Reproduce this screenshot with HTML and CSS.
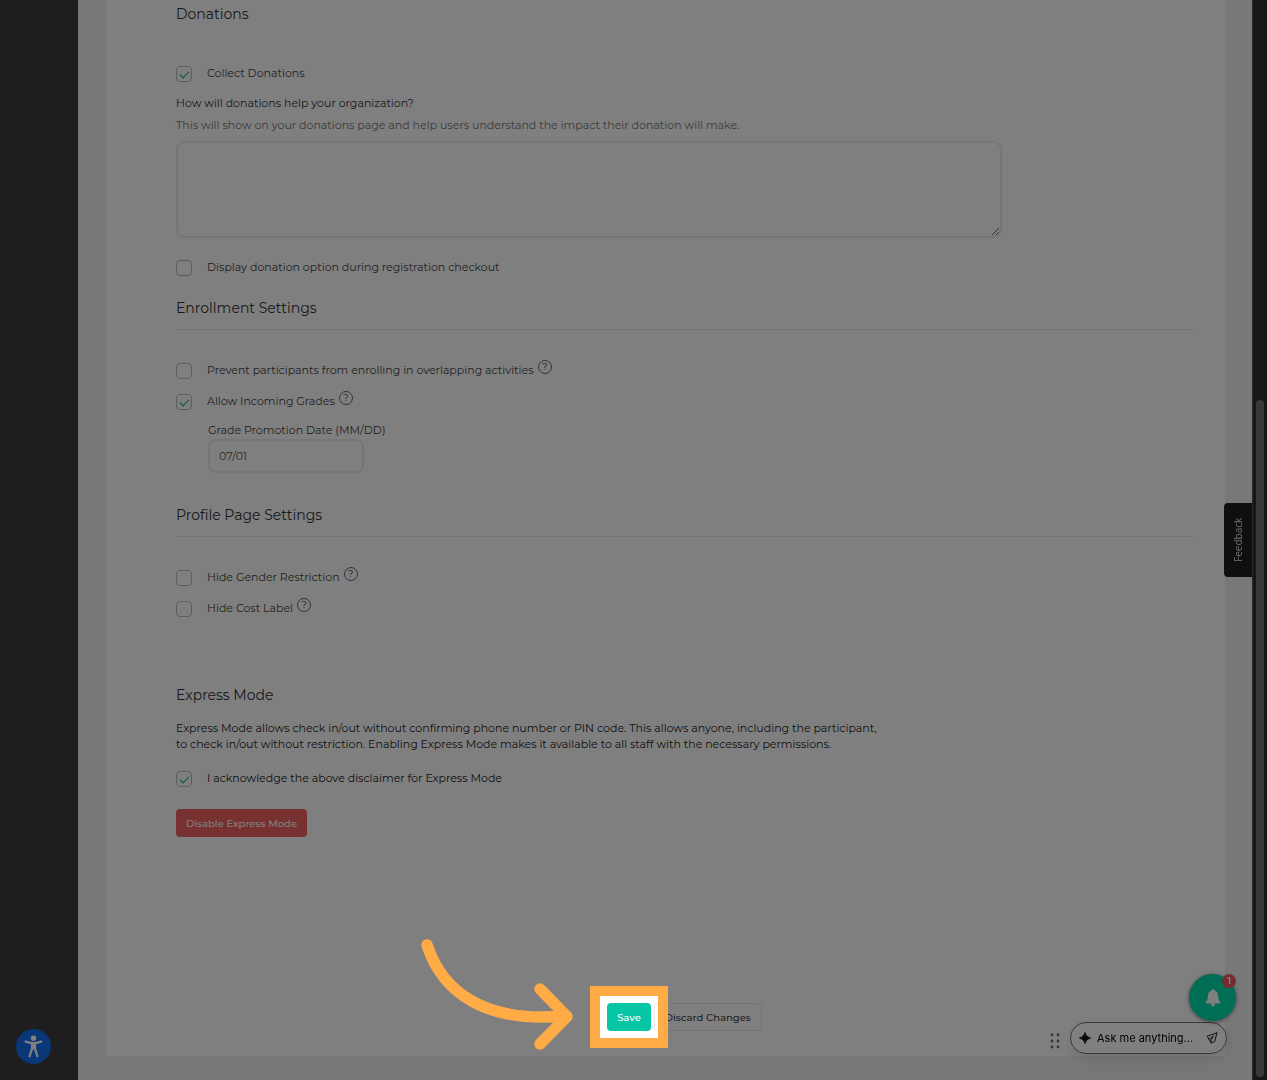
FILE: index.html
```
<!DOCTYPE html>
<html lang="en">
<head>
    <meta charset="UTF-8"/>
    <meta name="viewport" content="width=device-width, initial-scale=1"/>
    <title>Organization Settings</title>
    <link rel="stylesheet" href="styles.css">
</head>
<body>
<div class="page">
    <aside class="sidebar"></aside>

    <main class="main">
        <form class="card">
            <!-- ========== DONATIONS ========== -->
            <section class="section donations">
                <h2>Donations</h2>
                <div class="check-row">
                    <input type="checkbox" id="collect" checked/>
                    <label for="collect">Collect Donations</label>
                </div>
                <label class="field-label" for="impact">How will donations help your organization?</label>
                <p class="hint">This will show on your donations page and help users understand the impact their donation will make.</p>
                <textarea id="impact"></textarea>
                <div class="check-row">
                    <input type="checkbox" id="checkout"/>
                    <label for="checkout">Display donation option during registration checkout</label>
                </div>
            </section>

            <!-- ========== ENROLLMENT ========== -->
            <section class="section enrollment">
                <h2 class="ruled">Enrollment Settings</h2>
                <div class="check-row">
                    <input type="checkbox" id="overlap"/>
                    <label for="overlap">Prevent participants from enrolling in overlapping activities</label>
                    <span class="help">?</span>
                </div>
                <div class="check-row">
                    <input type="checkbox" id="grades" checked/>
                    <label for="grades">Allow Incoming Grades</label>
                    <span class="help">?</span>
                </div>
                <div class="sub-field">
                    <label for="promotion">Grade Promotion Date (MM/DD)</label>
                    <input type="text" id="promotion" value="07/01"/>
                </div>
            </section>

            <!-- ========== PROFILE PAGE ========== -->
            <section class="section profile">
                <h2 class="ruled">Profile Page Settings</h2>
                <div class="check-row">
                    <input type="checkbox" id="gender"/>
                    <label for="gender">Hide Gender Restriction</label>
                    <span class="help">?</span>
                </div>
                <div class="check-row">
                    <input type="checkbox" id="cost"/>
                    <label for="cost">Hide Cost Label</label>
                    <span class="help">?</span>
                </div>
            </section>

            <!-- ========== EXPRESS MODE ========== -->
            <section class="section express">
                <h2>Express Mode</h2>
                <p>Express Mode allows check in/out without confirming phone number or PIN code. This allows anyone, including the participant,<br/>
                    to check in/out without restriction. Enabling Express Mode makes it available to all staff with the necessary permissions.</p>
                <div class="check-row">
                    <input type="checkbox" id="ack" checked/>
                    <label for="ack">I acknowledge the above disclaimer for Express Mode</label>
                </div>
                <button type="button" class="btn danger">Disable Express Mode</button>
            </section>

            <!-- ========== FORM ACTIONS ========== -->
            <div class="actions">
                <div class="save-wrap">
                    <button type="button" class="btn save">Save</button>
                    <div class="spotlight"></div>
                    <svg class="arrow" viewBox="0 0 156 114" fill="none" stroke="#ffac47" stroke-width="11.500" stroke-linecap="round" stroke-linejoin="round">
                        <path d="M8 8C24 57 68 86 145 79"/>
                        <path d="M121 52L148 79.500L121 107"/>
                    </svg>
                </div>
                <button type="button" class="btn discard">Discard Changes</button>
            </div>
        </form>
    </main>

    <div class="scrollbar"><div class="thumb"></div></div>
</div>

<!-- ========== FLOATING WIDGETS ========== -->
<button class="accessibility" aria-label="Accessibility">
    <svg width="35" height="35" viewBox="0 0 36 36">
        <circle cx="18" cy="9.500" r="2.800" fill="#fff"/>
        <path d="M10 13L16 14.500H20L26 13M16.500 15V20L14 28M19.500 15V20L22 28M18 15V20" fill="none" stroke="#fff" stroke-width="2.400" stroke-linecap="round" stroke-linejoin="round"/>
    </svg>
</button>

<button class="feedback">Feedback</button>

<button class="bell" aria-label="Notifications">
    <svg width="16" height="18" viewBox="0 0 16 18" fill="#fff">
        <path d="M8 0C8.700 0 9.200.500 9.200 1.300C11.800 1.900 13 4 13 6.500C13 10 13.800 11.500 15 12.600C15.800 13.500 15.400 14.600 14.400 14.600H1.600C.600 14.600.200 13.500 1 12.600C2.200 11.500 3 10 3 6.500C3 4 4.200 1.900 6.800 1.300C6.800.500 7.300 0 8 0Z"/>
        <path d="M5.700 14.400H10.300C10 16.500 9.200 17.200 8 17.200S6 16.500 5.700 14.400Z"/>
    </svg>
    <span class="badge">1</span>
</button>

<div class="assistant">
    <svg class="grip" width="10" height="16" viewBox="0 0 10 16" fill="#666">
        <circle cx="2" cy="2" r="1.400"/><circle cx="8" cy="2" r="1.400"/>
        <circle cx="2" cy="8" r="1.400"/><circle cx="8" cy="8" r="1.400"/>
        <circle cx="2" cy="14" r="1.400"/><circle cx="8" cy="14" r="1.400"/>
    </svg>
    <button class="ask">
        <svg width="12" height="12" viewBox="0 0 14 14" fill="#111">
            <path d="M7 0.500Q8 6 13.500 7Q8 8 7 13.500Q6 8 0.500 7Q6 6 7 0.500Z" stroke="#111" stroke-linejoin="round"/>
        </svg>
        <span>Ask me anything...</span>
        <svg class="send" width="12" height="12" viewBox="0 0 12 12" fill="none" stroke="#222" stroke-linejoin="round" stroke-linecap="round">
            <path d="M10.800 1L1 4.200L3 7.200L5.200 11L8.800 9.500L10.800 1ZM3 7.200L7.200 4.500M5.200 11L5 8.200L7.200 4.500"/>
        </svg>
    </button>
</div>
</body>
</html>
```
FILE: styles.css
```
/* ========== GLOBAL STYLES ========== */
* {
  box-sizing: border-box;
}

body {
  margin: 0;
  background-color: #f0f0f0;
  color: #444;
  font-family: Montserrat, "Noto Sans", sans-serif;
  font-size: 11px;
}

h2, p {
  margin: 0;
}

button, input, textarea {
  font: inherit;
}

button {
  padding: 0;
  border: none;
  cursor: pointer;
}

.page {
  display: flex;
  min-height: 100vh;
  overflow: hidden;
}

.sidebar {
  flex: 0 0 78px;
  background-color: #3d3d3d;
}

.main {
  flex: 1;
  padding: 0 27px 24px 28px;
}

.card {
  display: flex;
  flex-direction: column;
  min-height: calc(100vh - 24px);
  padding: 4px 32px 25px 70px;
  background-color: #fff;
}

.scrollbar {
  flex: 0 0 15px;
  display: flex;
  flex-direction: column;
  justify-content: flex-end;
  padding: 3px;
  border-left: 1px solid #555;
  background-color: #2e2e2e;
}

.thumb {
  height: 63%;
  border-radius: 4px;
  background-color: #707070;
}

/* ========== SECTIONS ========== */
h2 {
  margin-bottom: 34px;
  color: #333;
  font-size: 14px;
  font-weight: 400;
  line-height: 20px;
}

h2.ruled {
  margin-bottom: 25px;
  padding-bottom: 11px;
  border-bottom: 1px solid #e6e6e6;
}

.enrollment {
  margin-top: 15px;
}

.profile {
  margin-top: 32px;
}

.express {
  margin-top: 61px;
  color: #222;
}

.express h2 {
  margin-bottom: 15px;
}

.express p {
  margin-bottom: 11px;
  line-height: 16px;
}

.check-row {
  display: flex;
  align-items: center;
  height: 31px;
}

.check-row label {
  margin: 0 0 1px 15px;
}

input[type="checkbox"] {
  appearance: none;
  width: 16px;
  height: 16px;
  margin: 1px 0 0;
  border: 1px solid #bbb;
  border-radius: 4px;
}

input[type="checkbox"]:checked::before {
  content: "";
  display: block;
  width: 8px;
  height: 4px;
  margin: 4px 0 0 3px;
  border-left: 1px solid #00a878;
  border-bottom: 1px solid #00a878;
  transform: rotate(-45deg);
}

.help {
  width: 14px;
  height: 14px;
  margin: 0 0 7px 4px;
  border: 1px solid #666;
  border-radius: 50%;
  font-size: 10px;
  line-height: 12px;
  text-align: center;
}

.field-label {
  display: block;
  margin-top: 3px;
  color: #333;
  line-height: 22px;
}

.hint {
  color: #777;
  line-height: 22px;
}

textarea {
  display: block;
  width: 826px;
  max-width: 100%;
  height: 97px;
  margin: 5px 0 14px;
  border: 2px solid #ececec;
  border-radius: 8px;
  background-color: #fff;
}

.sub-field {
  width: 180px;
  margin: 4px 0 0 32px;
}

.sub-field label {
  display: block;
  line-height: 18px;
  white-space: nowrap;
}

.sub-field input {
  width: 156px;
  height: 34px;
  padding: 0 9px;
  border: 2px solid #ececec;
  border-radius: 8px;
  color: #555;
}

/* ========== BUTTONS ========== */
.btn {
  height: 28px;
  padding: 0 10px;
  border-radius: 4px;
  font-size: 10px;
  font-weight: 500;
  white-space: nowrap;
}

.danger {
  margin-top: 15px;
  background-color: #f06262;
  color: #fff;
}

.actions {
  display: flex;
  justify-content: center;
  gap: 3px;
  margin-top: auto;
}

.save-wrap {
  position: relative;
}

.save {
  background-color: #06c6a6;
  color: #fff;
}

.discard {
  border: 1px solid #e8e8e8;
  background-color: #fff;
  color: #444;
}

/* ========== TOUR HIGHLIGHT ========== */
.spotlight {
  position: absolute;
  z-index: 10;
  inset: -17px;
  border: 10px solid #ffac47;
  box-shadow: 0 0 0 9999px rgba(0, 0, 0, 0.5);
  pointer-events: none;
}

.arrow {
  position: absolute;
  z-index: 11;
  right: 76px;
  bottom: -20px;
  width: 156px;
  height: 114px;
}

/* ========== FLOATING WIDGETS ========== */
.accessibility {
  position: fixed;
  left: 16px;
  bottom: 16px;
  width: 35px;
  height: 35px;
  border-radius: 50%;
  background-color: #146ef0;
}

.feedback {
  position: fixed;
  top: 503px;
  right: 15px;
  width: 28px;
  height: 74px;
  border-radius: 0 4px 4px 0;
  background-color: #1c1e20;
  color: #ddd;
  font-family: "Open Sans", sans-serif;
  font-size: 10px;
  writing-mode: vertical-rl;
  transform: rotate(180deg);
}

.bell {
  position: fixed;
  z-index: 2;
  right: 31px;
  bottom: 59px;
  display: flex;
  align-items: center;
  justify-content: center;
  width: 47px;
  height: 47px;
  border-radius: 50%;
  background-color: #00dda8;
  box-shadow: 0 1px 4px rgba(0, 0, 0, 0.5);
}

.badge {
  position: absolute;
  top: 0;
  right: 0;
  width: 14px;
  height: 14px;
  border-radius: 50%;
  background-color: #ee565c;
  color: #fff;
  font-family: Inter, sans-serif;
  font-size: 9px;
  font-weight: 700;
  line-height: 14px;
}

.assistant {
  position: fixed;
  right: 40px;
  bottom: 26px;
  display: flex;
  align-items: center;
  gap: 10px;
}

.grip {
  margin-top: 6px;
}

.ask {
  display: flex;
  align-items: center;
  width: 157px;
  height: 32px;
  padding: 0 8px;
  border: 1px solid #777;
  border-radius: 16px;
  background-color: #fff;
  box-shadow: 0 6px 14px rgba(0, 0, 0, 0.1);
  color: #000;
  font-family: Inter, sans-serif;
  font-size: 11px;
}

.ask span {
  margin: 0 auto 0 6px;
}
```
